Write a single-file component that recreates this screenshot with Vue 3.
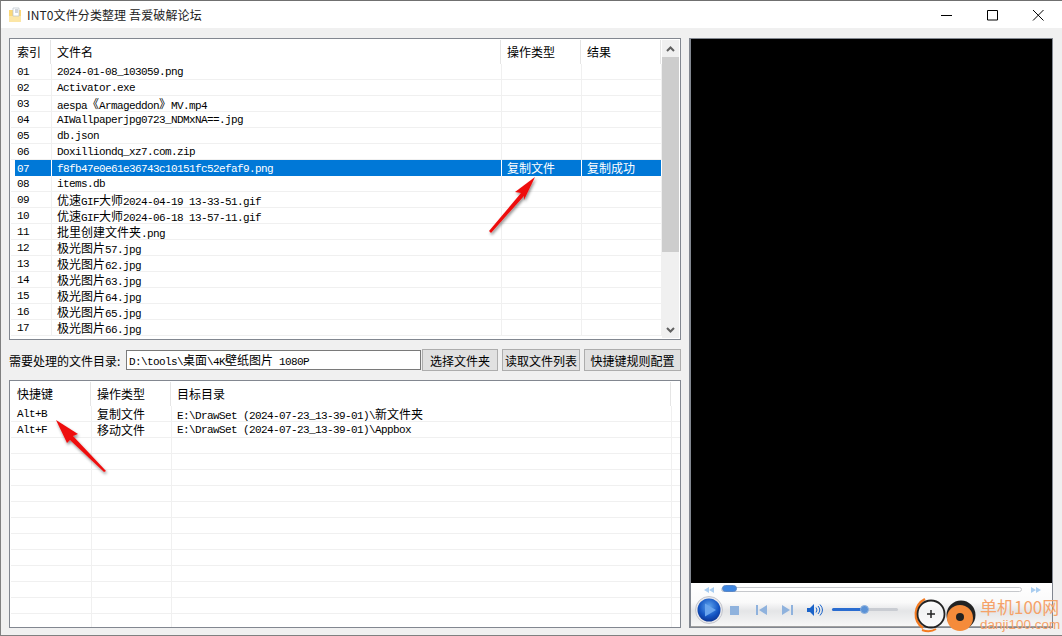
<template>
  <div class="window">
    <header class="titlebar">
      <svg class="app-icon" width="14" height="16" viewBox="0 0 14 16">
        <path d="M1 3h12v12H1z" fill="#fbd878" />
        <path d="M1 9h12v6H1z" fill="#fce6a6" />
        <path d="M5 1h6v8H5z" fill="#fff" stroke="#b9c3cc" stroke-width="0.7" />
        <path d="M7 3h3M7 5h3" stroke="#8a98a8" stroke-width="0.8" />
      </svg>
      <span class="title">INT0文件分类整理 吾爱破解论坛</span>
      <div class="win-btns">
        <svg class="win-btn" viewBox="0 0 46 27"><path d="M18 14.500h11" stroke="#000" fill="none" /></svg>
        <svg class="win-btn" viewBox="0 0 46 27"><path d="M18.500 9.500h10v9.500h-10z" stroke="#000" fill="none" /></svg>
        <svg class="win-btn" viewBox="0 0 46 27"><path d="M18 9l10.500 10.500M28.500 9L18 19.500" stroke="#000" fill="none" /></svg>
      </div>
    </header>

    <main class="content">
      <section class="left">
        <div class="list files">
          <div class="list-body">
            <div class="head">
              <div class="th" v-for="c in fileCols" :key="c.name" :style="{ width: c.w + 'px' }">{{ c.name }}</div>
            </div>
            <div
              v-for="f in files"
              :key="f.no"
              class="row"
              :class="{ selected: f.no === '07' }"
            >
              <div class="td" :style="{ width: '41px' }"><span class="idx">{{ f.no }}</span></div>
              <div class="td" :style="{ width: '450px' }"><template v-for="(r, i) in runs(f.name)" :key="i"><span :class="r.cls">{{ r.text }}</span></template></div>
              <div class="td cn" :style="{ width: '80px' }">{{ f.op }}</div>
              <div class="td cn" :style="{ width: '80px' }">{{ f.res }}</div>
            </div>
            <div class="row"></div>
          </div>
          <div class="scrollbar">
            <div class="sb-btn">
              <svg width="9" height="6" viewBox="0 0 9 6"><path d="M1 5l3.500-3.500L8 5" stroke="#606060" stroke-width="2" fill="none" /></svg>
            </div>
            <div class="sb-thumb"></div>
            <div class="sb-rest"></div>
            <div class="sb-btn">
              <svg width="9" height="6" viewBox="0 0 9 6"><path d="M1 1l3.500 3.500L8 1" stroke="#606060" stroke-width="2" fill="none" /></svg>
            </div>
          </div>
        </div>

        <div class="dir-row">
          <label class="dir-label"><span class="cn">需要处理的文件目录:</span></label>
          <div class="dir-input"><template v-for="(r, i) in runs(dirPath)" :key="i"><span :class="r.cls">{{ r.text }}</span></template></div>
          <button class="btn first">选择文件夹</button>
          <button class="btn second">读取文件列表</button>
          <button class="btn third">快捷键规则配置</button>
        </div>

        <div class="list keys">
          <div class="list-body">
            <div class="head">
              <div class="th" v-for="c in keyCols" :key="c.name" :style="{ width: c.w + 'px' }">{{ c.name }}</div>
            </div>
            <div v-for="(k, n) in keys" :key="n" class="row">
              <div class="td" :style="{ width: '81px' }"><template v-for="(r, i) in runs(k[0])" :key="i"><span :class="r.cls">{{ r.text }}</span></template></div>
              <div class="td cn" :style="{ width: '80px' }">{{ k[1] }}</div>
              <div class="td" :style="{ width: '500px' }"><template v-for="(r, i) in runs(k[2])" :key="i"><span :class="r.cls">{{ r.text }}</span></template></div>
            </div>
          </div>
        </div>
      </section>

      <section class="player">
        <div class="screen"></div>
        <div class="controls">
          <div class="seek-row">
            <svg width="10" height="6" viewBox="0 0 10 6"><path d="M5 0v6L0 3zM10 0v6L5 3z" fill="#a9cdf0" /></svg>
            <div class="seek-track"><div class="seek-thumb"></div></div>
            <svg width="10" height="6" viewBox="0 0 10 6"><path d="M0 0v6l5-3zM5 0v6l5-3z" fill="#a9cdf0" /></svg>
          </div>
          <div class="btn-row">
            <svg width="28" height="28" viewBox="0 0 28 28">
              <defs>
                <radialGradient id="pl" cx="50%" cy="35%" r="70%">
                  <stop offset="0" stop-color="#5fa4ee" />
                  <stop offset="0.6" stop-color="#1556c4" />
                  <stop offset="1" stop-color="#0a2f8c" />
                </radialGradient>
              </defs>
              <circle cx="14" cy="14" r="13.500" fill="#e8e8ec" stroke="#c4c6cc" />
              <circle cx="14" cy="14" r="11.500" fill="url(#pl)" />
              <path d="M10 7.500l11 6.500-11 6.500z" fill="#6aa5ee" />
            </svg>
            <div class="stop"></div>
            <svg class="prev" width="11" height="10" viewBox="0 0 11 10"><path d="M0 0h2v10H0zM11 0v10L3 5z" fill="#8fb2dd" /></svg>
            <svg class="next" width="11" height="10" viewBox="0 0 11 10"><path d="M9 0h2v10H9zM0 0v10l8-5z" fill="#8fb2dd" /></svg>
            <svg class="vol" width="16" height="12" viewBox="0 0 16 12">
              <path d="M0 4h3l4-4v12L3 8H0z" fill="#1a63c9" />
              <path d="M9 3.500q2 2.500 0 5M11 2q3.500 4 0 8M13 .5q5 5.500 0 11" stroke="#1a63c9" fill="none" />
            </svg>
            <div class="vol-track"><div class="vol-fill"></div><div class="vol-thumb"></div></div>
          </div>
        </div>
      </section>
    </main>

    <!-- red arrows drawn over the lists -->
    <svg class="overlay" width="1062" height="636" viewBox="0 0 1062 636">
      <defs>
        <filter id="sh" x="-30%" y="-30%" width="160%" height="160%">
          <feDropShadow dx="1" dy="2" stdDeviation="1.500" flood-color="#000" flood-opacity="0.45" />
        </filter>
      </defs>
      <g filter="url(#sh)" fill="#ee1010">
        <path d="M535 177L515 192l6 1-32 38 2 2 33-37v4z" />
        <path d="M56 420l22 14-5 2 33 35-2 1-34-32-3 3z" />
      </g>
    </svg>

    <!-- site watermark on top of the player -->
    <div class="watermark">
      <svg width="66" height="38" viewBox="0 0 66 38">
        <path d="M14 3a17 17 0 0 0-2 29" stroke="#f47a20" stroke-width="2.500" fill="none" />
        <path d="M11 34q8 3 14-1" stroke="#f47a20" stroke-width="2" fill="none" />
        <circle cx="20" cy="18" r="13.500" fill="#fff" fill-opacity="0.5" stroke="#222" stroke-width="1.800" />
        <path d="M16 18h8M20 14v8" stroke="#222" stroke-width="1.500" />
        <circle cx="50" cy="19" r="14.500" fill="#222" />
        <circle cx="49" cy="22" r="13" fill="#f58b3a" />
        <circle cx="49" cy="21" r="4" fill="#222" />
      </svg>
      <div class="wm-text">
        <div class="wm-cn">单机100网</div>
        <div class="wm-en">danji100.com</div>
      </div>
    </div>
  </div>
</template>

<script setup>
const fileCols = [
  { name: '索引', w: 40 },
  { name: '文件名', w: 450 },
  { name: '操作类型', w: 80 },
  { name: '结果', w: 80 }
]
const keyCols = [
  { name: '快捷键', w: 80 },
  { name: '操作类型', w: 80 },
  { name: '目标目录', w: 500 }
]

const names = [
  '2024-01-08_103059.png',
  'Activator.exe',
  'aespa《Armageddon》MV.mp4',
  'AIWallpaperjpg0723_NDMxNA==.jpg',
  'db.json',
  'Doxilliondq_xz7.com.zip',
  'f8fb47e0e61e36743c10151fc52efaf9.png',
  'items.db',
  '优速GIF大师2024-04-19 13-33-51.gif',
  '优速GIF大师2024-06-18 13-57-11.gif',
  '批里创建文件夹.png',
  '极光图片57.jpg',
  '极光图片62.jpg',
  '极光图片63.jpg',
  '极光图片64.jpg',
  '极光图片65.jpg',
  '极光图片66.jpg'
]
const files = names.map((name, i) => ({
  no: String(i + 1).padStart(2, '0'),
  name,
  op: i === 6 ? '复制文件' : '',
  res: i === 6 ? '复制成功' : ''
}))

const dirPath = 'D:\\tools\\桌面\\4K壁纸图片 1080P'

const keys = [
  ['Alt+B', '复制文件', 'E:\\DrawSet (2024-07-23_13-39-01)\\新文件夹'],
  ['Alt+F', '移动文件', 'E:\\DrawSet (2024-07-23_13-39-01)\\Appbox']
]
for (let i = 0; i < 14; i++) keys.push(['', '', ''])

// latin text is squeezed to half of the CJK cell, like the bitmap font in the app
const runs = (text) => {
  const parts = text.match(/[\u3000-\u9fff]+|[^\u3000-\u9fff]+/g) || []
  return parts.map((t) => ({ text: t, cls: /[\u3000-\u9fff]/.test(t) ? 'cn' : 'lat' }))
}
</script>

<style>
html, body {
  margin: 0;
  background: #f0f0f0;
}
</style>

<style scoped>
.window {
  position: relative;
  width: 1062px;
  height: 636px;
  box-sizing: border-box;
  overflow: hidden;
  border-top: 1px solid #707070;
  border-left: 1px solid #808080;
  border-bottom: 1px solid #808080;
  background: #f0f0f0;
  font-family: "Liberation Sans", "Noto Sans CJK SC", sans-serif;
  font-size: 12px;
  color: #000;
}
.titlebar {
  display: flex;
  align-items: center;
  height: 27px;
  padding-left: 7px;
  background: #fff;
}
.app-icon {
  margin-right: 5px;
}
.title {
  font-family: "Noto Sans CJK SC", sans-serif;
  font-size: 12px;
  letter-spacing: 0.12px;
  line-height: 27px;
  color: #222;
}
.win-btns {
  display: flex;
  margin-left: auto;
  padding-right: 1px;
}
.win-btn {
  width: 46px;
  height: 27px;
}
.content {
  display: flex;
  gap: 8px;
  padding: 10px 9px 7px 8px;
  box-sizing: border-box;
  height: 607px;
}
.left {
  display: flex;
  flex-direction: column;
  width: 672px;
  flex: none;
}

.list {
  display: flex;
  box-sizing: border-box;
  background: #fff;
  border: 1px solid #828790;
  overflow: hidden;
}
.files {
  height: 302px;
}
.keys {
  flex: 1;
  margin-top: 8px;
}
.list-body {
  flex: 1;
  padding: 1px 0 0 1px;
  overflow: hidden;
}
.head {
  display: flex;
  height: 24px;
}
.th {
  box-sizing: border-box;
  flex: none;
  padding-left: 6px;
  border-right: 1px solid #e5e5e5;
  font-family: "Noto Sans CJK SC", sans-serif;
  font-size: 12px;
  line-height: 24px;
}
.row {
  display: flex;
  height: 16px;
  box-sizing: border-box;
  border-bottom: 1px solid #f0f0f0;
}
.td {
  box-sizing: border-box;
  flex: none;
  padding-left: 6px;
  border-right: 1px solid #f0f0f0;
  line-height: 15px;
  white-space: pre;
  overflow: hidden;
}
.td + .td {
  padding-left: 5px;
}
.selected {
  border-bottom: none;
  color: #fff;
}
.selected .td {
  background: #0078d7;
  border-right-color: #fff;
  line-height: 16px;
}
.selected .td:first-child {
  background: linear-gradient(to right, #fff 4px, #0078d7 4px);
}
.idx,
.lat {
  font-family: "Liberation Mono", monospace;
  font-size: 11px;
  letter-spacing: -0.6px;
}
.cn {
  font-family: "Noto Sans CJK SC", sans-serif;
  font-size: 12px;
}
.scrollbar {
  display: flex;
  flex-direction: column;
  flex: none;
  width: 17px;
  margin: 1px 1px 1px 0;
  background: #f0f0f0;
}
.sb-btn {
  display: flex;
  align-items: center;
  justify-content: center;
  height: 17px;
}
.sb-thumb {
  height: 195px;
  background: #cdcdcd;
}
.sb-rest {
  flex: 1;
}

.dir-row {
  display: flex;
  align-items: center;
  height: 24px;
  margin-top: 8px;
}
.dir-label {
  width: 117px;
  flex: none;
  white-space: nowrap;
}
.dir-input {
  box-sizing: border-box;
  width: 295px;
  height: 20px;
  flex: none;
  padding-left: 2px;
  border: 1px solid #7a7a7a;
  background: #fff;
  line-height: 18px;
  white-space: pre;
}
.btn {
  box-sizing: border-box;
  height: 22px;
  padding: 0;
  flex: none;
  border: 1px solid #adadad;
  background: #e1e1e1;
  font-family: "Noto Sans CJK SC", sans-serif;
  font-size: 12px;
  color: #000;
}
.first {
  width: 76px;
  margin-left: 1px;
}
.second {
  width: 78px;
  margin-left: 4px;
}
.third {
  width: 97px;
  margin-left: 4px;
}

.player {
  display: flex;
  flex-direction: column;
  box-sizing: border-box;
  flex: none;
  width: 364px;
  border: 1px solid #828790;
  border-left-width: 2px;
  background: #f3f3f3;
}
.screen {
  height: 544px;
  background: #000;
}
.controls {
  flex: 1;
  background: linear-gradient(to bottom, #fff 0%, #fafafa 45%, #e4e5e7 65%, #f7f7f7 100%);
  border-bottom: 1px solid #a0a0a0;
}
.seek-row {
  display: flex;
  align-items: center;
  height: 13px;
  padding: 0 11px 0 13px;
}
.seek-track {
  position: relative;
  flex: 1;
  height: 3px;
  margin: 0 9px 0 7px;
  border: 1px solid #c6c8cc;
  border-radius: 3px;
  background: #fff;
}
.seek-thumb {
  position: absolute;
  left: 0;
  top: -3px;
  width: 15px;
  height: 7px;
  border: 1px solid #5c87c4;
  box-sizing: border-box;
  border-radius: 4px;
  background: #3f86e0;
}
.btn-row {
  display: flex;
  align-items: center;
  height: 28px;
  padding-left: 4px;
}
.stop {
  width: 9px;
  height: 9px;
  margin-left: 7px;
  background: #8fb2dd;
}
.prev {
  margin-left: 17px;
}
.next {
  margin-left: 15px;
}
.vol {
  margin-left: 14px;
}
.vol-track {
  position: relative;
  width: 66px;
  height: 3px;
  margin-left: 9px;
  margin-top: -2px;
  border-radius: 2px;
  background: #c9ccd2;
}
.vol-fill {
  width: 33px;
  height: 3px;
  border-radius: 2px;
  background: #2a6cd0;
}
.vol-thumb {
  position: absolute;
  left: 28px;
  top: -3px;
  width: 9px;
  height: 9px;
  border-radius: 50%;
  background: #5b92d6;
  border: 1px solid #8fb2dd;
  box-sizing: border-box;
}

.overlay {
  position: absolute;
  left: -1px;
  top: -1px;
  pointer-events: none;
}
.watermark {
  position: absolute;
  left: 910px;
  top: 595px;
  display: flex;
  align-items: flex-start;
}
.wm-text {
  margin-left: 3px;
  color: #f5a268;
}
.wm-cn {
  font-family: "Noto Sans CJK SC", sans-serif;
  font-size: 17px;
  line-height: 21px;
  white-space: nowrap;
}
.wm-en {
  font-family: "Liberation Sans", sans-serif;
  font-size: 13.500px;
  line-height: 15px;
  white-space: nowrap;
}
</style>
